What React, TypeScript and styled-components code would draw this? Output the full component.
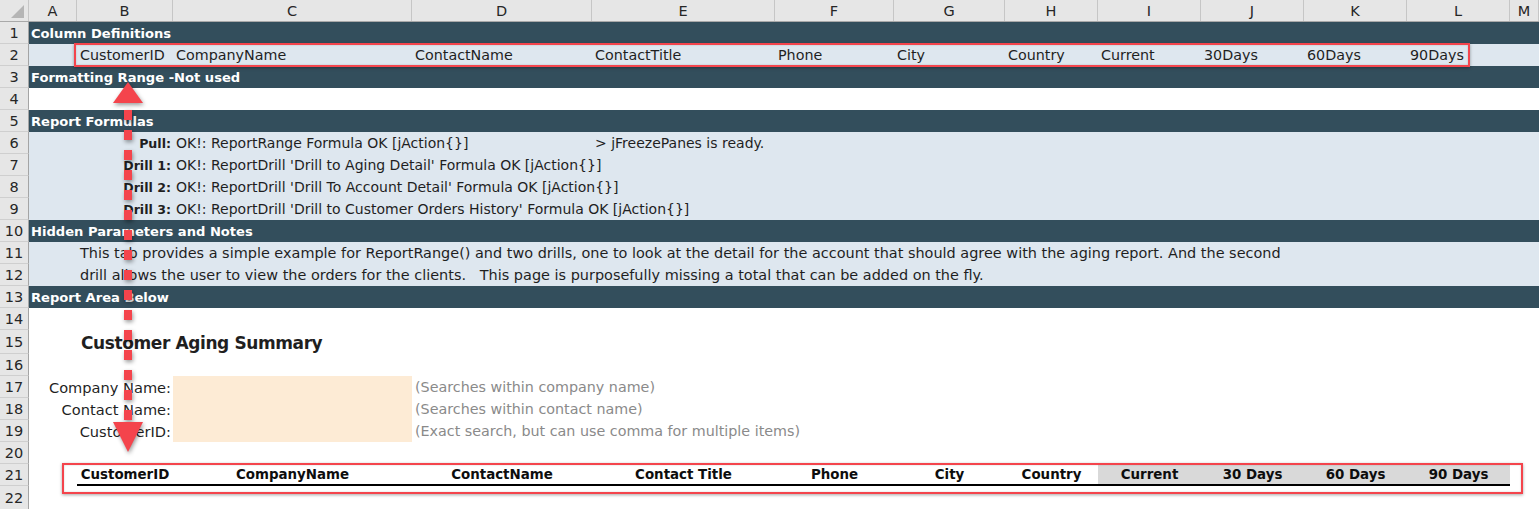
import React from "react";
import styled, { createGlobalStyle, css } from "styled-components";

const GlobalStyle = createGlobalStyle`
  html, body { margin: 0; padding: 0; background: #ffffff; overflow: hidden; }
  #root { width: 1539px; }
`;

const COLS = "29px 48px 96px 239px 180px 183px 119px 111px 93px 103px 103px 103px 103px 29px";
const FONT = `"DejaVu Sans", "Noto Sans", sans-serif`;
const DARK = "#334e5c";
const LIGHT = "#dee7ef";
const RED = "#f4444c";

const Sheet = styled.div`
  position: relative;
  width: 1539px;
  display: flex;
  flex-direction: column;
  font-family: ${FONT};
  color: #1f1f1f;
`;

type Tone = "dark" | "light" | "none";

const Row = styled.div<{ $h?: number; $tone?: Tone }>`
  display: grid;
  grid-template-columns: ${COLS};
  height: ${(p) => p.$h ?? 22}px;
  background: ${(p) => (p.$tone === "dark" ? DARK : p.$tone === "light" ? LIGHT : "#ffffff")};
`;

const HeaderRow = styled.div`
  display: grid;
  grid-template-columns: ${COLS};
  height: 22px;
  background: #e6e6e6;
  border-bottom: 1px solid #a9a9a9;
  box-sizing: border-box;
`;

const Corner = styled.div`
  position: relative;
  border-right: 1px solid #c6c6c6;
  &::after {
    content: "";
    position: absolute;
    right: 4px;
    bottom: 3px;
    width: 13px;
    height: 13px;
    background: #b5b5b5;
    clip-path: polygon(100% 0, 100% 100%, 0 100%);
  }
`;

const ColLetter = styled.div`
  display: flex;
  align-items: center;
  justify-content: center;
  font-size: 14.5px;
  color: #262626;
  border-right: 1px solid #c6c6c6;
`;

const RowNum = styled.div`
  grid-column: 1;
  display: flex;
  align-items: center;
  justify-content: center;
  background: #e6e6e6;
  border-right: 1px solid #a4a4a4;
  border-bottom: 1px solid #cfcfcf;
  box-sizing: border-box;
  font-size: 14.5px;
  color: #262626;
`;

const SectionTitle = styled.div`
  grid-column: 2 / 5;
  display: flex;
  align-items: center;
  padding-left: 2px;
  color: #ffffff;
  font-weight: bold;
  font-size: 13.1px;
  white-space: nowrap;
`;

const Cell = styled.div<{ $col: number; $span?: number; $right?: boolean }>`
  grid-column: ${(p) => p.$col} / span ${(p) => p.$span ?? 1};
  display: flex;
  align-items: center;
  justify-content: ${(p) => (p.$right ? "flex-end" : "flex-start")};
  padding: 0 ${(p) => (p.$right ? "2px" : "0")} 0 ${(p) => (p.$right ? "0" : "3px")};
  font-size: 14.3px;
  white-space: nowrap;
  min-width: 0;
  overflow: visible;
`;

const DefName = styled(Cell)`
  color: #1f1f1f;
`;

const FormulaLabel = styled(Cell)`
  font-weight: bold;
  font-size: 12.6px;
`;

const FormulaText = styled(Cell)`
  font-size: 14px;
`;

const NoteText = styled(Cell)`
  padding-left: 3px;
  font-size: 14.45px;
`;

const Title = styled(Cell)`
  font-weight: bold;
  font-size: 17px;
  letter-spacing: -0.4px;
  padding-left: 4px;
  padding-top: 2px;
`;

const FieldLabel = styled(Cell)`
  font-size: 14.6px;
`;

const InputBox = styled.div`
  grid-column: 4;
  background: #fdebd5;
`;

const Hint = styled(Cell)`
  color: #8a8a8a;
`;

const TableHead = styled.div<{ $col: number; $shaded?: boolean }>`
  grid-column: ${(p) => p.$col};
  display: flex;
  align-items: center;
  justify-content: center;
  font-weight: bold;
  font-size: 13.4px;
  white-space: nowrap;
  background: ${(p) => (p.$shaded ? "#d9d9d9" : "transparent")};
  border-bottom: 2px solid #000000;
  box-sizing: border-box;
  color: #0d0d0d;
`;

const Highlight = styled.div<{ $left: number; $top: number; $w: number; $h: number }>`
  position: absolute;
  ${(p) => css`
    left: ${p.$left}px;
    top: ${p.$top}px;
    width: ${p.$w}px;
    height: ${p.$h}px;
  `}
  box-sizing: border-box;
  border: 2px solid ${RED};
  box-shadow: 0 1px 3px rgba(0, 0, 0, 0.35), inset 0 0 2px rgba(0, 0, 0, 0.2);
  pointer-events: none;
`;

const ArrowLayer = styled.svg`
  position: absolute;
  left: 108px;
  top: 78px;
  overflow: visible;
  filter: drop-shadow(1px 2px 2px rgba(0, 0, 0, 0.4));
  pointer-events: none;
`;

const letters = ["A", "B", "C", "D", "E", "F", "G", "H", "I", "J", "K", "L", "M"];
const defs = ["CustomerID", "CompanyName", "ContactName", "ContactTitle", "Phone", "City", "Country", "Current", "30Days", "60Days", "90Days"];
const heads = ["CustomerID", "CompanyName", "ContactName", "Contact Title", "Phone", "City", "Country", "Current", "30 Days", "60 Days", "90 Days"];

const formulas = [
  { label: "Pull:", text: "OK!: ReportRange Formula OK [jAction{}]", extra: "> jFreezePanes is ready." },
  { label: "Drill 1:", text: "OK!: ReportDrill 'Drill to Aging Detail' Formula OK [jAction{}]" },
  { label: "Drill 2:", text: "OK!: ReportDrill 'Drill To Account Detail' Formula OK [jAction{}]" },
  { label: "Drill 3:", text: "OK!: ReportDrill 'Drill to Customer Orders History' Formula OK [jAction{}]" },
];

const fields = [
  { label: "Company Name:", hint: "(Searches within company name)" },
  { label: "Contact Name:", hint: "(Searches within contact name)" },
  { label: "CustomerID:", hint: "(Exact search, but can use comma for multiple items)" },
];

export default function App() {
  return (
    <>
      <GlobalStyle />
      <Sheet>
        <HeaderRow>
          <Corner />
          {letters.map((l) => (
            <ColLetter key={l}>{l}</ColLetter>
          ))}
        </HeaderRow>

        <Row $tone="dark">
          <RowNum>1</RowNum>
          <SectionTitle>Column Definitions</SectionTitle>
        </Row>
        <Row $tone="light">
          <RowNum>2</RowNum>
          {defs.map((d, i) => (
            <DefName key={d} $col={i + 3}>{d}</DefName>
          ))}
        </Row>
        <Row $tone="dark">
          <RowNum>3</RowNum>
          <SectionTitle>Formatting Range -Not used</SectionTitle>
        </Row>
        <Row>
          <RowNum>4</RowNum>
        </Row>
        <Row $tone="dark">
          <RowNum>5</RowNum>
          <SectionTitle>Report Formulas</SectionTitle>
        </Row>
        {formulas.map((f, i) => (
          <Row key={f.label} $tone="light">
            <RowNum>{6 + i}</RowNum>
            <FormulaLabel $col={3} $right>{f.label}</FormulaLabel>
            <FormulaText $col={4} $span={2}>{f.text}</FormulaText>
            {f.extra && <FormulaText $col={6} $span={2}>{f.extra}</FormulaText>}
          </Row>
        ))}
        <Row $tone="dark">
          <RowNum>10</RowNum>
          <SectionTitle>Hidden Parameters and Notes</SectionTitle>
        </Row>
        <Row $tone="light">
          <RowNum>11</RowNum>
          <NoteText $col={3} $span={9}>
            This tab provides a simple example for ReportRange() and two drills, one to look at the detail for the account that should agree with the aging report. And the second
          </NoteText>
        </Row>
        <Row $tone="light">
          <RowNum>12</RowNum>
          <NoteText $col={3} $span={9}>
            {"drill allows the user to view the orders for the clients.\u00a0\u00a0 This page is purposefully missing a total that can be added on the fly."}
          </NoteText>
        </Row>
        <Row $tone="dark">
          <RowNum>13</RowNum>
          <SectionTitle>Report Area Below</SectionTitle>
        </Row>
        <Row>
          <RowNum>14</RowNum>
        </Row>
        <Row $h={24}>
          <RowNum>15</RowNum>
          <Title $col={3} $span={3}>Customer Aging Summary</Title>
        </Row>
        <Row>
          <RowNum>16</RowNum>
        </Row>
        {fields.map((f, i) => (
          <Row key={f.label}>
            <RowNum>{17 + i}</RowNum>
            <FieldLabel $col={2} $span={2} $right>{f.label}</FieldLabel>
            <InputBox />
            <Hint $col={5} $span={3}>{f.hint}</Hint>
          </Row>
        ))}
        <Row>
          <RowNum>20</RowNum>
        </Row>
        <Row>
          <RowNum>21</RowNum>
          {heads.map((h, i) => (
            <TableHead key={h} $col={i + 3} $shaded={i >= 7}>{h}</TableHead>
          ))}
        </Row>
        <Row $h={24}>
          <RowNum>22</RowNum>
        </Row>

        <Highlight $left={74} $top={43} $w={1396} $h={24} />
        <Highlight $left={62} $top={463} $w={1461} $h={31} />

        <ArrowLayer width={40} height={380} viewBox="0 0 40 380">
          <polygon points="20,4 35,25 5,25" fill={RED} />
          <line x1={20} y1={32} x2={20} y2={344} stroke={RED} strokeWidth={8} strokeDasharray="10 10" />
          <polygon points="5,344 35,344 20,374" fill={RED} />
        </ArrowLayer>
      </Sheet>
    </>
  );
}
